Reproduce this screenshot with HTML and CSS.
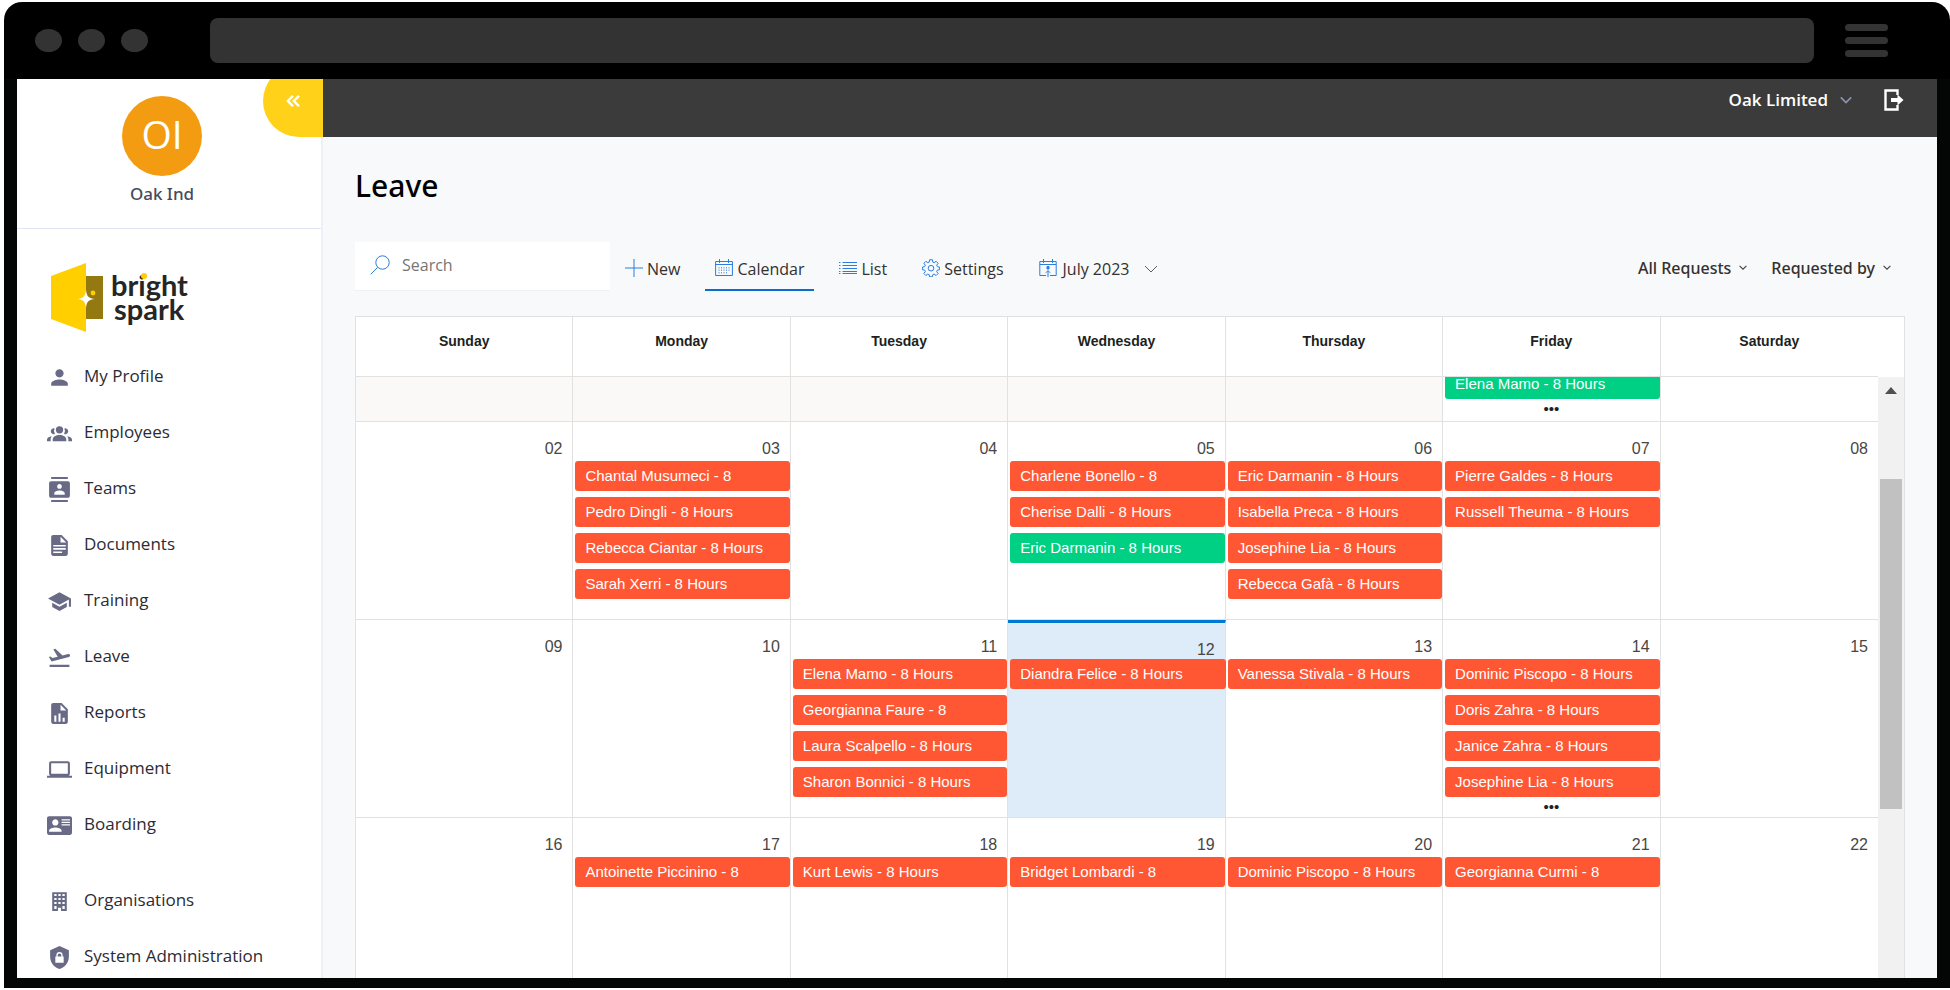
FILE: index.html
```html
<!DOCTYPE html>
<html lang="en">
<head>
<meta charset="utf-8">
<title>Leave</title>
<link rel="stylesheet" href="styles.css">
</head>
<body>
<svg class="sprite" aria-hidden="true">
  <symbol id="i-person" viewBox="0 0 24 24"><path d="M12 12c2.21 0 4-1.79 4-4s-1.79-4-4-4-4 1.79-4 4 1.79 4 4 4zm0 2c-2.67 0-8 1.34-8 4v2h16v-2c0-2.66-5.33-4-8-4z"/></symbol>
  <symbol id="i-groups" viewBox="0 0 24 24"><circle cx="12" cy="8.5" r="3.5"/><path d="M5.500 19.500v-1.800c0-2.600 3.200-4.200 6.500-4.200s6.500 1.600 6.500 4.200v1.800z"/><path d="M7.300 7.200a2.800 2.800 0 1 0 .3 5.200 5.200 5.200 0 0 1-.3-5.200zM16.700 7.200a2.800 2.800 0 1 1-.3 5.200 5.200 5.200 0 0 0 .3-5.200zM0 19.500v-1.500c0-1.600 1.600-2.900 4.600-3.300-.8.900-1.100 1.900-1.100 3v1.800zM24 19.500v-1.500c0-1.600-1.600-2.900-4.600-3.300.8.900 1.100 1.900 1.100 3v1.800z"/></symbol>
  <symbol id="i-teams" viewBox="0 0 24 24"><path d="M20 0H4v2h16V0zM4 24h16v-2H4v2zM20 4H4c-1.100 0-2 .9-2 2v12c0 1.100.9 2 2 2h16c1.100 0 2-.9 2-2V6c0-1.100-.9-2-2-2zm-8 2.750c1.240 0 2.250 1.010 2.250 2.250s-1.010 2.250-2.250 2.250S9.750 10.240 9.750 9 10.760 6.750 12 6.750zM17 17H7v-1.500c0-1.670 3.330-2.500 5-2.500s5 .83 5 2.500V17z"/></symbol>
  <symbol id="i-doc" viewBox="0 0 24 24"><path fill-rule="evenodd" d="M14 2H6c-1.100 0-2 .9-2 2v16c0 1.100.9 2 2 2h12c1.100 0 2-.9 2-2V8l-6-6zm-1 1.500V9h5.500zM6 11.500h12V13H6zM6 14.500h12V16H6zM6 17.800h8.500v1.500H6z"/></symbol>
  <symbol id="i-training" viewBox="0 0 24 24"><path d="M5 13.180v4L12 21l7-3.820v-4L12 17l-7-3.820zM12 3 1 9l11 6 9-4.910V17h2V9L12 3z"/></symbol>
  <symbol id="i-leave" viewBox="0 0 24 24"><path d="M2.500 19h19v2h-19zM22.070 9.640c-.21-.8-1.040-1.280-1.840-1.060L14.920 10l-6.900-6.430-1.930.51 4.140 7.170-4.970 1.330-1.970-1.540-1.450.39 2.590 4.490L21 11.490c.81-.23 1.280-1.050 1.070-1.850z"/></symbol>
  <symbol id="i-report" viewBox="0 0 24 24"><path fill-rule="evenodd" d="M14 2H6c-1.100 0-2 .9-2 2v16c0 1.100.9 2 2 2h12c1.100 0 2-.9 2-2V8l-6-6zm-1 1.500V9h5.500zM7 14h2v6H7zM11 12h2v8h-2zM15 16h2v4h-2z"/></symbol>
  <symbol id="i-laptop" viewBox="0 0 24 24"><path d="M20 18c1.100 0 1.990-.9 1.990-2L22 6c0-1.100-.9-2-2-2H4c-1.100 0-2 .9-2 2v10c0 1.100.9 2 2 2H0v2h24v-2h-4zM4 6h16v10H4V6z"/></symbol>
  <symbol id="i-card" viewBox="0 0 24 24"><path fill-rule="evenodd" d="M22 3H2C.9 3 0 3.900 0 5v14c0 1.100.9 2 2 2h20c1.100 0 2-.9 2-2V5c0-1.100-.9-2-2-2zM8 6c1.660 0 3 1.340 3 3s-1.340 3-3 3-3-1.340-3-3 1.340-3 3-3zm6 12H2v-1c0-2 4-3.100 6-3.100s6 1.100 6 3.100v1zM14 6h8v1.200h-8zM14 8.400h8v1.200h-8zM14 10.800h8V12h-8z"/></symbol>
  <symbol id="i-building" viewBox="0 0 24 24"><path fill-rule="evenodd" d="M5 3h14v18h-5.500v-3h-3v3H5zM7 4.800v2h2.200v-2zM10.900 4.800v2h2.200v-2zM14.800 4.800v2H17v-2zM7 8.600v2h2.200v-2zM10.900 8.600v2h2.200v-2zM14.800 8.600v2H17v-2zM7 12.400v2h2.200v-2zM10.900 12.400v2h2.200v-2zM14.800 12.400v2H17v-2zM7 16.200v3h2.200v-3zM14.800 16.200v3H17v-3z"/></symbol>
  <symbol id="i-shield" viewBox="0 0 24 24"><path fill-rule="evenodd" d="M12 1 3 5v6c0 5.550 3.840 10.740 9 12 5.160-1.260 9-6.450 9-12V5l-9-4zM8 11h1V9.800a3 3 0 0 1 6 0V11h1v6H8zM10.300 11h3.400V9.800a1.700 1.700 0 0 0-3.400 0z"/></symbol>
  <symbol id="i-chev" viewBox="0 0 14 8"><path d="M1 1l6 6 6-6" fill="none" stroke="currentColor"/></symbol>
</svg>

<div class="frame">
  <header class="chrome">
    <div class="dots"><i></i><i></i><i></i></div>
    <div class="address"></div>
    <div class="burger"><i></i><i></i><i></i></div>
  </header>
  <div class="app">
    <aside class="sidebar">
      <div class="profile">
        <div class="avatar">OI</div>
        <div class="profile-name">Oak Ind</div>
        <button class="collapse" type="button" aria-label="Collapse menu"><svg width="14" height="12" viewBox="0 0 14 12"><path d="M7 .8 1.800 6 7 11.200M13 .8 7.800 6 13 11.200" fill="none" stroke="#fff" stroke-width="2.400"/></svg></button>
      </div>
      <svg class="logo" width="144" height="72" viewBox="0 0 144 72" role="img" aria-label="bright spark">
        <path d="M34 14h18v43H34z" fill="#93790f"/>
        <path d="M0 14 35 1v69L0 57z" fill="#ffcf00"/>
        <path d="M35 28c.8 6.500 2.500 8.200 9 9-6.500.8-8.200 2.500-9 9-.8-6.500-2.500-8.200-9-9 6.500-.8 8.200-2.500 9-9z" fill="#fff"/>
        <circle cx="42" cy="31" r="2.400" fill="#ffcf00"/>
        <text class="logo-text"><tspan x="60" y="34">bright</tspan><tspan x="63" y="58">spark</tspan></text>
        <circle cx="93" cy="14" r="3" fill="#ffcf00"/>
      </svg>
      <nav class="nav">
        <a href="#"><svg><use href="#i-person"/></svg>My Profile</a>
        <a href="#"><svg><use href="#i-groups"/></svg>Employees</a>
        <a href="#"><svg><use href="#i-teams"/></svg>Teams</a>
        <a href="#"><svg><use href="#i-doc"/></svg>Documents</a>
        <a href="#"><svg><use href="#i-training"/></svg>Training</a>
        <a href="#"><svg><use href="#i-leave"/></svg>Leave</a>
        <a href="#"><svg><use href="#i-report"/></svg>Reports</a>
        <a href="#"><svg><use href="#i-laptop"/></svg>Equipment</a>
        <a href="#"><svg><use href="#i-card"/></svg>Boarding</a>
        <a href="#" class="nav-gap"><svg><use href="#i-building"/></svg>Organisations</a>
        <a href="#"><svg><use href="#i-shield"/></svg>System Administration</a>
      </nav>
    </aside>
    <div class="main">
      <div class="topbar">
        <button class="company" type="button">Oak Limited <svg width="12" height="8"><use href="#i-chev"/></svg></button>
        <button class="logout" type="button" aria-label="Log out"><svg width="20" height="22" viewBox="0 0 20 22"><path d="M13.500 6V1.500h-12v19h12V16" fill="none" stroke="#fff" stroke-width="2.400"/><path d="M7 9h6.500V5.500L19.500 11l-6 5.500V13H7z" fill="#fff"/></svg></button>
      </div>
      <main class="content">
        <h1>Leave</h1>
        <div class="toolbar">
          <label class="search">
            <svg width="20" height="20" viewBox="0 0 20 20"><path d="M7.700 12.300.7 19.300" /><circle cx="12.500" cy="7.500" r="6.700"/></svg>
            <input type="search" placeholder="Search" aria-label="Search">
          </label>
          <button class="tool tool-new" type="button"><svg width="18" height="18" viewBox="0 0 18 18"><path d="M9 0v18M0 9h18"/></svg>New</button>
          <button class="tool active" type="button"><svg width="18" height="18" viewBox="0 0 18 18"><path d="M.6 2.500h16.800v14H.6zM.6 5.500h16.800M4.500 0v4M13.500 0v4"/><path stroke-dasharray="1.500 1" d="M4 8v7M6.500 8v7M9 8v7M11.500 8v7M14 8v4" opacity=".7"/></svg>Calendar</button>
          <button class="tool" type="button"><svg width="18" height="18" viewBox="0 0 18 18"><path d="M3.500 3.500H18M3.500 6.500H18M3.500 9.500H18M3.500 12.500H18M3.500 14.500H18M0 3.500h1.500M0 6.500h1.500M0 9.500h1.500M0 12.500h1.500M0 14.500h1.500"/></svg>List</button>
          <button class="tool" type="button"><svg width="18" height="18" viewBox="0 0 18 18"><circle cx="9" cy="9.200" r="2.800"/><path d="M7.600.8h2.800l.4 2.300 1.400.6 1.900-1.400 2 2-1.400 1.900.6 1.400 2.100.4v2.800l-2.100.4-.6 1.400 1.400 1.900-2 2-1.900-1.400-1.400.6-.4 2.100H7.600l-.4-2.100-1.400-.6-1.900 1.400-2-2 1.400-1.900-.6-1.400L.6 10.800V8l2.100-.4.6-1.400-1.400-1.900 2-2 1.900 1.400 1.400-.6z"/></svg>Settings</button>
          <button class="tool tool-date" type="button"><svg width="18" height="18" viewBox="0 0 18 18"><path d="M7 16.500H.8v-14h16.400v14H11M.8 5.500h16.400M4.500 0v4M13.500 0v4M9 18v-6M6.800 13.800 9 11.500l2.200 2.300"/><path d="M8 7.500h2v2.500H8z" fill="#2b7de0"/></svg>July 2023<svg class="date-chev" width="14" height="8"><use href="#i-chev"/></svg></button>
          <div class="filters">
            <button type="button">All Requests <svg width="8" height="5" viewBox="0 0 14 8"><path d="M1 1l6 6 6-6"/></svg></button>
            <button type="button">Requested by <svg width="8" height="5" viewBox="0 0 14 8"><path d="M1 1l6 6 6-6"/></svg></button>
          </div>
        </div>
        <div class="calendar">
          <table>
            <thead><tr><th>Sunday</th><th>Monday</th><th>Tuesday</th><th>Wednesday</th><th>Thursday</th><th>Friday</th><th>Saturday</th></tr></thead>
            <tbody>
              <tr class="cut">
                <td class="other"></td><td class="other"></td><td class="other"></td><td class="other"></td><td class="other"></td>
                <td><div class="clip"><div class="ev ok">Elena Mamo - 8 Hours</div><div class="more">•••</div></div></td>
                <td></td>
              </tr>
              <tr>
                <td><div class="num">02</div></td>
                <td><div class="num">03</div><div class="ev">Chantal Musumeci - 8</div><div class="ev">Pedro Dingli - 8 Hours</div><div class="ev">Rebecca Ciantar - 8 Hours</div><div class="ev">Sarah Xerri - 8 Hours</div></td>
                <td><div class="num">04</div></td>
                <td><div class="num">05</div><div class="ev">Charlene Bonello - 8</div><div class="ev">Cherise Dalli - 8 Hours</div><div class="ev ok">Eric Darmanin - 8 Hours</div></td>
                <td><div class="num">06</div><div class="ev">Eric Darmanin - 8 Hours</div><div class="ev">Isabella Preca - 8 Hours</div><div class="ev">Josephine Lia - 8 Hours</div><div class="ev">Rebecca Gafà - 8 Hours</div></td>
                <td><div class="num">07</div><div class="ev">Pierre Galdes - 8 Hours</div><div class="ev">Russell Theuma - 8 Hours</div></td>
                <td><div class="num">08</div></td>
              </tr>
              <tr>
                <td><div class="num">09</div></td>
                <td><div class="num">10</div></td>
                <td><div class="num">11</div><div class="ev">Elena Mamo - 8 Hours</div><div class="ev">Georgianna Faure - 8</div><div class="ev">Laura Scalpello - 8 Hours</div><div class="ev">Sharon Bonnici - 8 Hours</div></td>
                <td class="today"><div class="num">12</div><div class="ev">Diandra Felice - 8 Hours</div></td>
                <td><div class="num">13</div><div class="ev">Vanessa Stivala - 8 Hours</div></td>
                <td><div class="num">14</div><div class="ev">Dominic Piscopo - 8 Hours</div><div class="ev">Doris Zahra - 8 Hours</div><div class="ev">Janice Zahra - 8 Hours</div><div class="ev">Josephine Lia - 8 Hours</div><div class="more">•••</div></td>
                <td><div class="num">15</div></td>
              </tr>
              <tr>
                <td><div class="num">16</div></td>
                <td><div class="num">17</div><div class="ev">Antoinette Piccinino - 8</div></td>
                <td><div class="num">18</div><div class="ev">Kurt Lewis - 8 Hours</div></td>
                <td><div class="num">19</div><div class="ev">Bridget Lombardi - 8</div></td>
                <td><div class="num">20</div><div class="ev">Dominic Piscopo - 8 Hours</div></td>
                <td><div class="num">21</div><div class="ev">Georgianna Curmi - 8</div></td>
                <td><div class="num">22</div></td>
              </tr>
            </tbody>
          </table>
          <div class="scroll-col"><div class="scrollbar"><svg width="12" height="7" viewBox="0 0 12 7"><path d="M0 7 6 0l6 7z" fill="#505050"/></svg><div class="thumb"></div></div></div>
        </div>
      </main>
    </div>
  </div>
</div>
</body>
</html>
```
FILE: styles.css
```css
* { box-sizing: border-box; }
html, body { height: 100%; }
body { margin: 0; background: #fff; font-family: "Open Sans", "Noto Sans", sans-serif; font-size: 16px; color: #323130; overflow: hidden; }
button { border: 0; background: none; padding: 0; font: inherit; color: inherit; cursor: pointer; display: flex; align-items: center; }
a { color: inherit; text-decoration: none; }
svg { flex: none; display: block; }
.sprite { position: absolute; width: 0; height: 0; }

.frame { height: 100vh; padding: 2px 0 2px 4px; display: flex; flex-direction: column; }
.chrome { height: 77px; flex: none; background: #000; border-radius: 18px 18px 0 0; display: flex; align-items: center; padding: 0 62px 0 31px; }
.dots { display: flex; gap: 16px; }
.dots i { width: 27px; height: 23px; border-radius: 50%; background: #333; }
.address { flex: 1; height: 45px; margin: 0 31px 0 62px; border-radius: 8px; background: #333; }
.burger { display: flex; flex-direction: column; gap: 6px; width: 43px; }
.burger i { height: 7px; border-radius: 4px; background: #333; }
.app { flex: 1; min-height: 0; display: flex; background: #f8f9fb; border: solid #040605; border-width: 0 13px 10px; overflow: hidden; }

.sidebar { width: 306px; flex: none; background: #fff; border-right: 2px solid #eef0f8; display: flex; flex-direction: column; }
.profile { position: relative; height: 150px; flex: none; border-bottom: 1px solid #e1e5f1; display: flex; flex-direction: column; align-items: center; padding: 17px 14px 0 0; }
.avatar { width: 80px; height: 80px; border-radius: 50%; background: #f39c12; color: #fff; font-size: 39px; line-height: 50px; display: flex; align-items: center; justify-content: center; padding-bottom: 4px; }
.profile-name { margin-top: 6px; font: 500 17px/24px "Noto Sans", sans-serif; color: #464b5c; }
.collapse { position: absolute; right: -2px; top: -14px; width: 60px; height: 72px; border-radius: 36px 0 0 36px; background: #ffd119; justify-content: center; }
.logo { margin: 33px 0 0 34px; }
.logo-text { font: 700 29px Lato, sans-serif; fill: #262626; }
.nav { display: flex; flex-direction: column; padding: 13px 0 0 30px; }
.nav a { height: 56px; flex: none; display: flex; align-items: center; gap: 12px; font-size: 17px; color: #2b2b35; }
.nav svg { width: 25px; height: 25px; margin-top: 4px; fill: #686a86; }
.nav .nav-gap { margin-top: 20px; }

.main { flex: 1; min-width: 0; display: flex; flex-direction: column; }
.topbar { height: 58px; flex: none; background: #3b3b3b; color: #fff; display: flex; justify-content: flex-end; align-items: flex-start; gap: 32px; padding: 10px 33px 0 0; }
.company { gap: 12px; font-size: 17px; font-weight: 600; line-height: 22px; }
.company svg { color: #8b93b0; stroke-width: 2; }
.content { flex: 1; min-height: 0; display: flex; flex-direction: column; padding: 29px 32px 0; }
h1 { margin: 0; font: 500 30px/40px "Noto Sans", sans-serif; color: #000; }
.toolbar { display: flex; align-items: flex-start; margin-top: 36px; height: 49px; flex: none; }
.search { width: 255px; height: 49px; background: #fff; display: flex; align-items: center; gap: 12px; padding: 0 15px 3px; border-bottom: 1px solid #f0f1f2; }
.search input { width: 100%; border: 0; outline: 0; background: none; padding: 0; font: inherit; color: #323130; }
.search input::placeholder { color: #757575; opacity: 1; }
.toolbar svg { fill: none; stroke: #2b7de0; stroke-width: 1; }
.tool { height: 49px; gap: 4px; padding: 6px 10px 0; margin-left: 15px; border-bottom: 2px solid transparent; }
.tool svg { margin-bottom: 2px; }
.tool-new { margin-left: 5px; }
.tool-date { gap: 6px; }
.tool.active { border-color: #0a6ed1; }
.toolbar .date-chev { color: #605e5c; stroke: #605e5c; margin: 0 0 0 9px; }
.filters { margin-left: auto; display: flex; gap: 24px; height: 49px; padding: 2px 14px 0 0; font-family: "Noto Sans", sans-serif; font-weight: 500; }
.filters button { gap: 8px; }
.filters svg { stroke: #444; stroke-width: 2; }

.calendar { flex: 1; min-height: 0; margin-top: 25px; display: flex; background: #fff; border: solid #e1e1e1; border-width: 1px 1px 0; overflow: hidden; align-items: flex-start; font-family: "Liberation Sans", Arial, sans-serif; }
table { width: calc(100% - 26px); flex: none; border-collapse: separate; border-spacing: 0; table-layout: fixed; }
th, td { padding: 0; border-right: 1px solid #e1e1e1; border-bottom: 1px solid #e1e1e1; vertical-align: top; }
th:last-child, td:last-child { border-right: 0; }
th { height: 60px; vertical-align: middle; padding-bottom: 12px; font-size: 14px; font-weight: 700; color: #201f1e; }
td { height: 198px; }
.cut td { height: 45px; }
.other { background: #faf9f8; }
.clip { height: 44px; padding-bottom: 2px; display: flex; flex-direction: column; justify-content: flex-end; overflow: hidden; }
.num { padding: 16px 10px 0 0; height: 39px; font-size: 16px; line-height: 22px; text-align: right; color: #484644; }
.ev { flex: none; height: 30px; margin: 0 0 6px 2px; padding-left: 10px; border-radius: 3px; background: #ff5733; color: #fff; font-size: 15px; line-height: 30px; white-space: nowrap; overflow: hidden; }
.ok { background: #00d084; }
.more { flex: none; height: 20px; margin-top: -6px; line-height: 20px; font-size: 15px; text-align: center; color: #222; }
.today { background: #deecf9; border-top: 3px solid #0078d4; }
.today .num { height: 36px; }
.today .ev { margin-right: -1px; }
.scroll-col { width: 26px; flex: none; align-self: stretch; padding-top: 60px; display: flex; }
.scrollbar { flex: 1; background: #f1f1f1; display: flex; flex-direction: column; align-items: center; padding: 10px 2px 0; }
.thumb { width: 22px; height: 330px; margin-top: 85px; background: #c1c1c1; }
```
